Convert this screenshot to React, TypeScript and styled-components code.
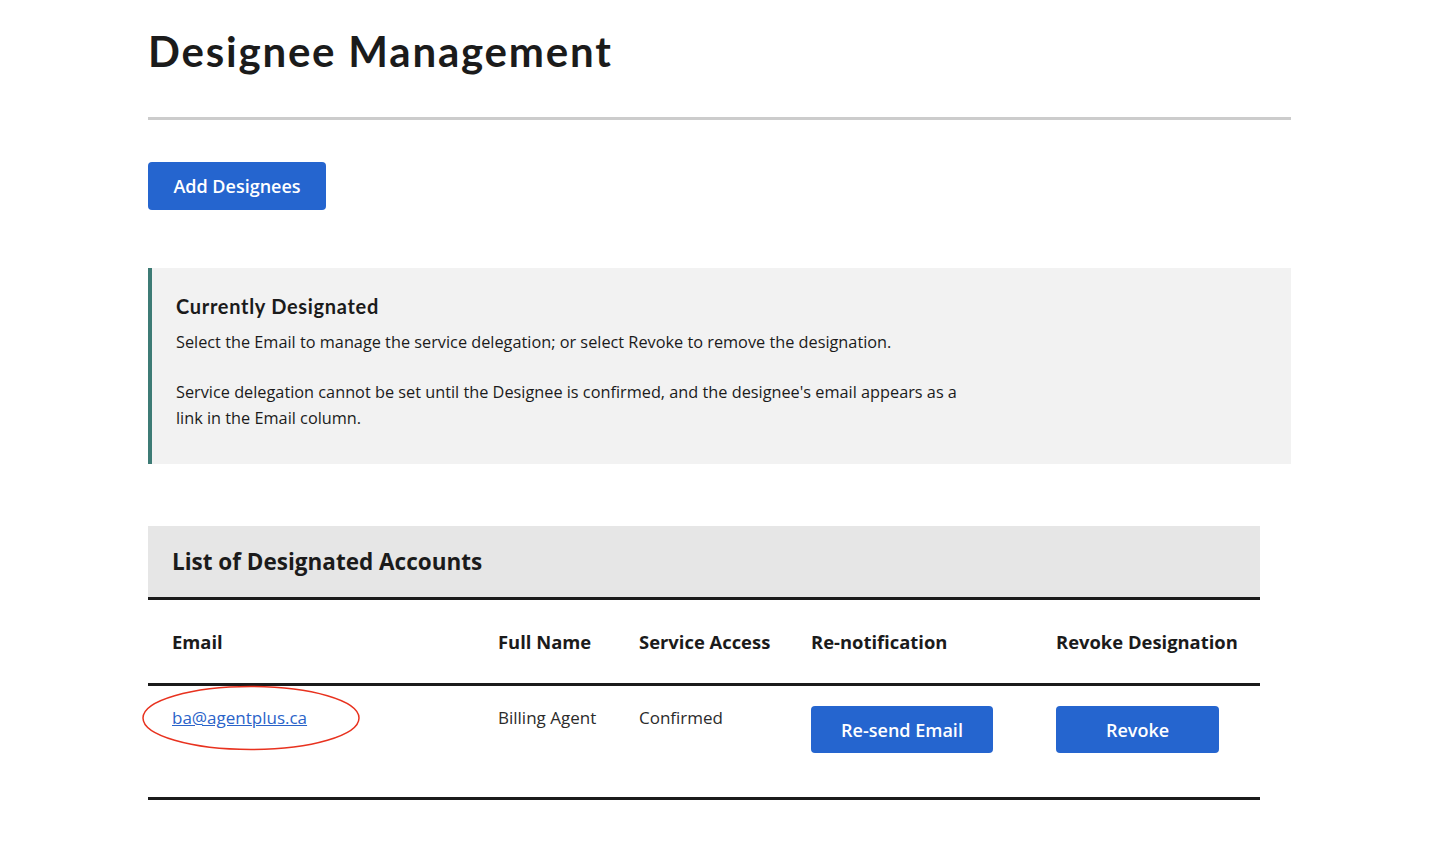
import React from "react";
import styled, { createGlobalStyle } from "styled-components";

const Global = createGlobalStyle`
  html, body { margin: 0; padding: 0; background: #ffffff; }
  body { font-family: "Open Sans", "Noto Sans", sans-serif; color: #1b1b1b; }
  * { box-sizing: border-box; }
`;

const Page = styled.main`
  width: 1143px;
  margin-left: 148px;
  padding-top: 26px;
  display: flex;
  flex-direction: column;
`;

const Title = styled.h1`
  font-family: "Lato", "Noto Sans", sans-serif;
  font-weight: 700;
  font-size: 42px;
  line-height: 50px;
  letter-spacing: 1.8px;
  margin: 0;
  color: #1b1b1b;
`;

const Rule = styled.hr`
  border: none;
  height: 3px;
  background: #cccccc;
  margin: 41px 0 0 0;
  width: 100%;
`;

const Button = styled.button<{ $w: number; $h?: number }>`
  width: ${(p) => p.$w}px;
  height: ${(p) => p.$h ?? 48}px;
  background: #2565cf;
  color: #ffffff;
  border: none;
  border-radius: 4px;
  font-family: "Open Sans", "Noto Sans", sans-serif;
  font-weight: 600;
  font-size: 18px;
  cursor: pointer;
  padding: 0;
`;

const Actions = styled.div`
  margin-top: 42px;
`;

const InfoBox = styled.section`
  margin-top: 58px;
  background: #f2f2f2;
  border-left: 4px solid #3d7b75;
  padding: 25px 24px 0 24px;
  height: 196px;
`;

const InfoTitle = styled.h2`
  font-family: "Lato", "Noto Sans", sans-serif;
  font-weight: 700;
  font-size: 20px;
  line-height: 26px;
  margin: 0 0 10px 0;
  letter-spacing: 0.7px;
`;

const InfoText = styled.p<{ $gap?: number }>`
  margin: ${(p) => p.$gap ?? 0}px 0 0 0;
  font-size: 16.3px;
  line-height: 26px;
  max-width: 790px;
  color: #1b1b1b;
`;

const TableWrap = styled.section`
  margin-top: 62px;
  width: 1112px;
  position: relative;
`;

const Caption = styled.div`
  background: #e6e6e6;
  height: 74px;
  padding-left: 24px;
  display: flex;
  align-items: center;
  font-weight: 700;
  font-size: 22.5px;
  border-bottom: 3px solid #1b1b1b;
`;

const Row = styled.div<{ $h: number; $head?: boolean }>`
  display: grid;
  grid-template-columns: 326px 141px 172px 245px 228px;
  height: ${(p) => p.$h}px;
  border-bottom: 3px solid #1b1b1b;
  align-items: ${(p) => (p.$head ? "center" : "start")};
`;

const HeadCell = styled.div`
  padding-left: 24px;
  font-weight: 700;
  font-size: 18.4px;
  line-height: 24px;
`;

const Cell = styled.div<{ $pt: number }>`
  padding-left: 24px;
  padding-top: ${(p) => p.$pt}px;
  font-size: 17px;
  line-height: 24px;
  color: #2b2b2b;
`;

const EmailLink = styled.a`
  color: #2a63c9;
  text-decoration: underline;
  font-size: 17px;
`;

const Highlight = styled.svg`
  position: absolute;
  left: -8px;
  top: 158px;
  pointer-events: none;
`;

export default function App() {
  return (
    <>
      <Global />
      <Page>
        <Title>Designee Management</Title>
        <Rule />
        <Actions>
          <Button $w={178}>Add Designees</Button>
        </Actions>
        <InfoBox>
          <InfoTitle>Currently Designated</InfoTitle>
          <InfoText>
            Select the Email to manage the service delegation; or select Revoke to remove the designation.
          </InfoText>
          <InfoText $gap={24}>
            Service delegation cannot be set until the Designee is confirmed, and the designee's email appears as a link in the Email column.
          </InfoText>
        </InfoBox>
        <TableWrap>
          <Caption>List of Designated Accounts</Caption>
          <Row $h={86} $head>
            <HeadCell>Email</HeadCell>
            <HeadCell>Full Name</HeadCell>
            <HeadCell>Service Access</HeadCell>
            <HeadCell>Re-notification</HeadCell>
            <HeadCell>Revoke Designation</HeadCell>
          </Row>
          <Row $h={114}>
            <Cell $pt={20}>
              <EmailLink href="#">ba@agentplus.ca</EmailLink>
            </Cell>
            <Cell $pt={20}>Billing Agent</Cell>
            <Cell $pt={20}>Confirmed</Cell>
            <Cell $pt={20}>
              <Button $w={182} $h={47}>Re-send Email</Button>
            </Cell>
            <Cell $pt={20}>
              <Button $w={163} $h={47}>Revoke</Button>
            </Cell>
          </Row>
          <Highlight width="222" height="68" viewBox="0 0 222 68">
            <ellipse cx="111" cy="34" rx="108" ry="31.5" fill="none" stroke="#e8321f" strokeWidth="1.5" />
          </Highlight>
        </TableWrap>
      </Page>
    </>
  );
}
